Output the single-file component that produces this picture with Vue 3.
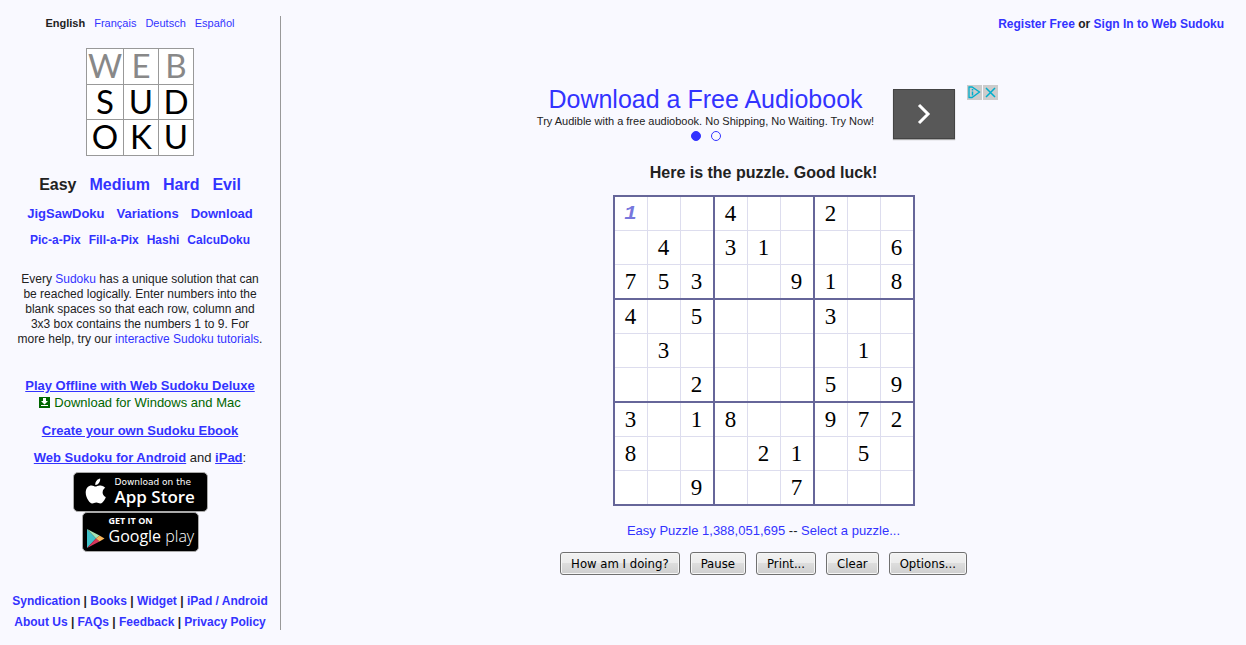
<script setup>
import { reactive } from 'vue'

const languages = ['Français', 'Deutsch', 'Español']
const levels = ['Medium', 'Hard', 'Evil']
const variants = ['JigSawDoku', 'Variations', 'Download']
const otherGames = ['Pic-a-Pix', 'Fill-a-Pix', 'Hashi', 'CalcuDoku']
const logo = ['W', 'E', 'B', 'S', 'U', 'D', 'O', 'K', 'U']
const footer = [
  ['Syndication', 'Books', 'Widget', 'iPad / Android'],
  ['About Us', 'FAQs', 'Feedback', 'Privacy Policy'],
]
const actions = ['How am I doing?', 'Pause', 'Print...', 'Clear', 'Options...']

const givens = [
  '...4..2..',
  '.4.31...6',
  '753..91.8',
  '4.5...3..',
  '.3.....1.',
  '..2...5.9',
  '3.18..972',
  '8...21.5.',
  '..9..7...',
]

const board = reactive(
  givens.map((line) =>
    [...line].map((c) => ({ given: c !== '.', value: c === '.' ? '' : c }))
  )
)
board[0][0].value = '1'
</script>

<template>
  <div class="page">
    <aside class="sidebar">
      <nav class="languages">
        <strong>English</strong>
        <a v-for="l in languages" :key="l" href="#">{{ l }}</a>
      </nav>

      <div class="logo">
        <span v-for="(c, i) in logo" :key="i" :class="{ pale: i < 3 }">{{ c }}</span>
      </div>

      <nav class="levels">
        <strong>Easy</strong>
        <a v-for="l in levels" :key="l" href="#">{{ l }}</a>
      </nav>
      <nav class="variants">
        <a v-for="v in variants" :key="v" href="#">{{ v }}</a>
      </nav>
      <nav class="others">
        <a v-for="g in otherGames" :key="g" href="#">{{ g }}</a>
      </nav>

      <p class="intro">
        Every <a href="#">Sudoku</a> has a unique solution that can<br />
        be reached logically. Enter numbers into the<br />
        blank spaces so that each row, column and<br />
        3x3 box contains the numbers 1 to 9. For<br />
        more help, try our <a href="#">interactive Sudoku tutorials</a>.
      </p>

      <div class="promo offline">
        <a href="#" class="bold">Play Offline with Web Sudoku Deluxe</a>
        <a href="#" class="download">
          <svg width="11" height="11" viewBox="0 0 11 11" aria-hidden="true">
            <rect width="11" height="11" fill="#006600" />
            <path d="M4 1h3v3h2L5.500 7.500 2 4h2z" fill="#fff" />
            <rect x="2" y="8" width="7" height="1" fill="#fff" />
          </svg>
          <span>Download for Windows and Mac</span>
        </a>
      </div>
      <div class="promo"><a href="#" class="bold">Create your own Sudoku Ebook</a></div>
      <div class="promo">
        <a href="#" class="bold">Web Sudoku for Android</a> and <a href="#" class="bold">iPad</a>:
      </div>

      <div class="stores">
        <a href="#" class="badge apple">
          <svg width="22" height="28" viewBox="0 0 22 27" aria-hidden="true">
            <path
              fill="#fff"
              d="M15.200 0c.2 1.700-.4 3.300-1.300 4.500-.9 1.200-2.200 2-3.600 1.900-.2-1.600.5-3.200 1.300-4.200C12.500 1 14 .1 15.200 0zM20.300 9.300c-.2.100-2.700 1.600-2.700 4.500 0 3.500 3.100 4.700 3.200 4.700 0 .1-.5 1.800-1.700 3.500-1.100 1.500-2.100 3.100-3.800 3.100-1.600 0-2.100-1-4-1-1.900 0-2.500 1-4.100 1-1.600 0-2.700-1.400-3.800-3C1.900 20 .7 16.900.7 14c0-4.500 2.900-7 5.900-7 1.600 0 2.900 1.100 3.900 1.100.9 0 2.400-1.200 4.200-1.200.8 0 3.700.1 5.600 2.400z"
            />
          </svg>
          <span class="badge-text"><small>Download on the</small><b>App Store</b></span>
        </a>
        <a href="#" class="badge google">
          <svg width="19" height="21" viewBox="0 0 19 21" aria-hidden="true">
            <path d="M1 1v19L10 10.500z" fill="#3fc1c9" />
            <path d="M1 1l9 9.500L13.500 7.500z" fill="#a4e3b4" />
            <path d="M1 20l9-9.500 3.500 3z" fill="#d8365c" />
            <path d="M13.500 7.500L18.500 10.500l-5 3L10 10.500z" fill="#f9b65c" />
          </svg>
          <span class="badge-text"><small>GET IT ON</small><b>Google <i>play</i></b></span>
        </a>
      </div>

      <footer class="footer">
        <div v-for="(row, r) in footer" :key="r">
          <template v-for="(item, i) in row" :key="item"
            ><template v-if="i"> | </template><a href="#">{{ item }}</a></template
          >
        </div>
      </footer>
    </aside>

    <main class="main">
      <div class="account">
        <a href="#">Register Free</a> or <a href="#">Sign In to Web Sudoku</a>
      </div>

      <section class="ad">
        <div class="ad-copy">
          <a href="#" class="ad-title">Download a Free Audiobook</a>
          <span class="ad-line">Try Audible with a free audiobook. No Shipping, No Waiting. Try Now!</span>
          <span class="dots"><i class="dot full"></i><i class="dot"></i></span>
        </div>
        <button class="ad-go" aria-label="Open">
          <svg width="14" height="22" viewBox="0 0 14 22" aria-hidden="true">
            <path d="M2 2l9 9-9 9" fill="none" stroke="#fff" stroke-width="3" />
          </svg>
        </button>
        <div class="ad-marks">
          <svg width="15" height="15" viewBox="0 0 15 15" aria-hidden="true">
            <rect width="15" height="15" fill="#ccc" />
            <path d="M2 2l3 0 7.500 5L5 12.500H2z" fill="none" stroke="#00aecd" stroke-width="1.300" />
            <path d="M5.500 4v1.500M5.500 6.500v4" stroke="#00aecd" stroke-width="1.500" />
          </svg>
          <svg width="15" height="15" viewBox="0 0 15 15" aria-hidden="true">
            <rect width="15" height="15" fill="#ccc" />
            <path d="M3 3l9 9M12 3l-9 9" stroke="#00aecd" stroke-width="1.500" />
          </svg>
        </div>
      </section>

      <h1 class="message">Here is the puzzle. Good luck!</h1>

      <table class="board">
        <tbody>
          <tr v-for="(row, r) in board" :key="r">
            <td v-for="(cell, c) in row" :key="c">
              <input
                v-model="cell.value"
                :readonly="cell.given"
                :class="{ guess: !cell.given }"
                :aria-label="`Row ${r + 1}, column ${c + 1}`"
                maxlength="1"
                autocomplete="off"
              />
            </td>
          </tr>
        </tbody>
      </table>

      <div class="puzzle-id">
        <a href="#">Easy Puzzle 1,388,051,695</a> -- <a href="#">Select a puzzle...</a>
      </div>

      <div class="actions">
        <button v-for="a in actions" :key="a" class="action">{{ a }}</button>
      </div>
    </main>
  </div>
</template>

<style>
body {
  background: #f9f9ff;
}
</style>

<style scoped>
.page {
  display: flex;
  align-items: flex-start;
  padding: 16px 0;
  font-family: 'Liberation Sans', Arial, sans-serif;
  font-size: 13px;
  color: #222;
}
a {
  color: #33f;
  text-decoration: none;
}
svg {
  flex: none;
}
.sidebar {
  flex: 0 0 280px;
  border-right: 1px solid #999;
  text-align: center;
}
.languages,
.levels,
.variants,
.others {
  display: flex;
  justify-content: center;
  white-space: nowrap;
}
.languages {
  gap: 9px;
  font-size: 11px;
  line-height: 14px;
}
.logo {
  display: grid;
  grid-template-columns: 36px 34px 34px;
  grid-template-rows: 35px 34px 35px;
  gap: 1px;
  width: max-content;
  margin: 18px auto 0;
  padding: 1px;
  background: #999;
  font-family: Lato, sans-serif;
  font-size: 33px;
  line-height: 32px;
  color: #000;
}
.logo span {
  display: flex;
  justify-content: center;
  background: #fff;
}
.logo .pale {
  color: #888;
}
.levels {
  gap: 13px;
  margin-top: 19px;
  font-size: 16px;
  font-weight: bold;
  line-height: 20px;
}
.variants {
  gap: 12px;
  margin-top: 11px;
  font-weight: bold;
  line-height: 16px;
}
.others {
  gap: 8px;
  margin-top: 10px;
  font-size: 12px;
  font-weight: bold;
  line-height: 16px;
}
.intro {
  margin: 24px 0 0;
  font-size: 12px;
  line-height: 15px;
  white-space: nowrap;
}
.promo {
  margin-top: 11px;
  line-height: 16px;
}
.offline {
  display: flex;
  flex-direction: column;
  align-items: center;
  margin: 30px 0 12px;
  line-height: 17px;
}
.bold {
  font-weight: bold;
  text-decoration: underline;
}
.download {
  display: flex;
  align-items: center;
  gap: 4px;
  color: #060;
}
.stores {
  display: flex;
  flex-direction: column;
  align-items: center;
  margin-top: 6px;
}
.badge {
  display: flex;
  align-items: center;
  box-sizing: border-box;
  height: 40px;
  border: 1px solid #aaa;
  border-radius: 5px;
  background: #000;
  color: #fff;
  text-align: left;
}
.badge-text {
  display: flex;
  flex-direction: column;
  font-family: 'Open Sans', 'Noto Sans', sans-serif;
  white-space: nowrap;
}
.apple {
  width: 135px;
  padding-left: 11px;
  gap: 8px;
}
.apple small {
  font-family: 'DejaVu Sans', sans-serif;
  font-size: 9px;
  line-height: 12px;
}
.apple b {
  font-size: 17px;
  font-weight: 600;
  line-height: 18px;
}
.apple .badge-text {
  margin-bottom: 2px;
}
.google {
  width: 117px;
  padding-left: 3px;
  gap: 4px;
}
.google svg {
  margin-top: 12px;
}
.google small {
  font-size: 9px;
  font-weight: 700;
  line-height: 12px;
}
.google b {
  font-size: 16px;
  font-weight: 400;
  line-height: 18px;
}
.google .badge-text {
  margin-bottom: 4px;
}
.google i {
  font-style: normal;
  font-weight: 300;
}
.footer {
  display: flex;
  flex-direction: column;
  gap: 6px;
  margin-top: 42px;
  font-size: 12px;
  font-weight: bold;
  line-height: 15px;
}
.main {
  flex: 1;
  display: flex;
  flex-direction: column;
  align-items: center;
}
.account {
  align-self: flex-end;
  margin-right: 22px;
  font-size: 12px;
  font-weight: bold;
  line-height: 16px;
}
.ad {
  display: flex;
  width: 468px;
  height: 60px;
  margin-top: 53px;
}
.ad-copy {
  display: flex;
  flex-direction: column;
  align-items: center;
  flex: 1;
  white-space: nowrap;
}
.ad-title {
  font-size: 25px;
  line-height: 29px;
}
.ad-line {
  font-size: 11px;
  line-height: 14px;
}
.dots {
  display: flex;
  gap: 10px;
  margin-top: 3px;
}
.dot {
  box-sizing: border-box;
  width: 10px;
  height: 10px;
  border: 1px solid #33f;
  border-radius: 50%;
}
.full {
  background: #33f;
}
.ad-go {
  display: flex;
  align-items: center;
  justify-content: center;
  width: 62px;
  height: 50px;
  margin: 4px 12px 0 11px;
  padding: 0;
  border: 1px solid #444;
  background: #585858;
  box-shadow: 0 1px 1px #aaa;
}
.ad-marks {
  display: flex;
  gap: 1px;
}
.message {
  margin: 18px 0 12px;
  font-size: 16px;
  line-height: 20px;
}
.board {
  border: 2px solid #669;
  border-right: 0;
  border-bottom: 0;
  border-spacing: 0;
  background: #fff;
}
.board td {
  padding: 0;
}
.board td:nth-child(3n) {
  border-right: 2px solid #669;
}
.board tr:nth-child(3n) td {
  border-bottom: 2px solid #669;
}
.board input {
  display: block;
  width: 32px;
  height: 33px;
  padding: 0;
  border: 0 solid #dde;
  border-width: 0 1px 1px 0;
  border-radius: 0;
  outline: 0;
  background: transparent;
  color: #000;
  font-family: 'Liberation Serif', 'Times New Roman', serif;
  font-size: 23px;
  text-align: center;
}
.board td:nth-child(3n) input {
  border-right-width: 0;
}
.board tr:nth-child(3n) input {
  border-bottom-width: 0;
}
.board .guess {
  color: #77d;
  font-family: 'Liberation Mono', monospace;
  font-size: 21px;
  font-style: italic;
  font-weight: bold;
}
.puzzle-id {
  margin-top: 17px;
  line-height: 16px;
}
.actions {
  display: flex;
  gap: 10px;
  margin-top: 13px;
}
.action {
  box-sizing: border-box;
  height: 23px;
  padding: 0 10px;
  border: 1px solid #707070;
  border-radius: 3px;
  background: linear-gradient(#f2f2f2 0, #ebebeb 50%, #ddd 50%, #cfcfcf 100%);
  box-shadow: inset 0 0 0 1px #f6f6f6;
  color: #000;
  font-family: 'DejaVu Sans Condensed', 'DejaVu Sans', sans-serif;
  font-size: 13px;
  white-space: nowrap;
}
</style>
